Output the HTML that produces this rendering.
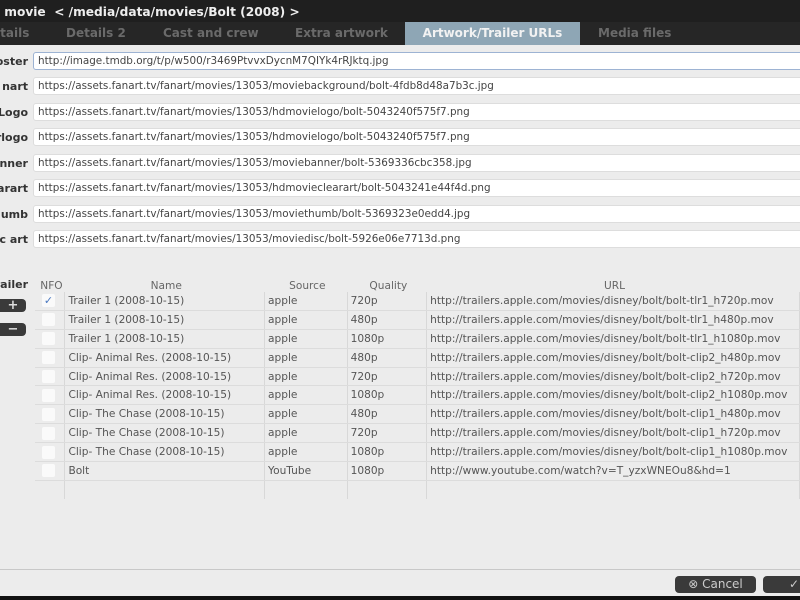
<!DOCTYPE html><html><head><style>
body{margin:0;width:800px;height:600px;overflow:hidden;background:#ececec;font-family:"DejaVu Sans","Liberation Sans",sans-serif;position:relative}
.t{position:absolute;left:0;top:0;width:800px;height:22px;background:#1f1f1f;color:#eee;font-weight:bold;font-size:12.2px;line-height:24px}
.tabs{position:absolute;left:0;top:22px;width:800px;height:23px;background:#262626}
.tab{position:absolute;top:0;height:23px;line-height:23px;font-size:12px;font-weight:bold;color:#6a6a6a}
.tab.a{background:#8ea6b5;color:#f2f2f2;text-align:center}
.lab{position:absolute;right:772px;font-size:11px;font-weight:bold;color:#333;white-space:nowrap}
.in{position:absolute;left:33px;width:775px;height:18px;background:#fff;border:1px solid #ddd;border-radius:3px;font-size:10.4px;color:#444;line-height:17px;padding-left:4px;box-sizing:border-box}
.in.f{border:1px solid #9db3d3}
table{position:absolute;left:35px;top:280px;border-collapse:collapse;font-size:10.6px;color:#555}
td,th{padding:0 0 0 3px;height:17.9px;white-space:nowrap;border-right:1px solid #d8d8d8;border-bottom:1px solid #dcdcdc;text-align:left}
th{font-weight:normal;text-align:center;height:12px;border:none;color:#666}
.cb{width:13px;height:13px;background:#fafafa;border-radius:2px;margin-left:4px;color:#4a78c0;font-size:11px;line-height:13px;text-align:center}
.btn{position:absolute;top:576px;height:17px;background:#3a3a3a;border-radius:4px;color:#ccc;font-size:12px;line-height:17px}
.pm{position:absolute;left:0;width:26px;height:13px;background:#3a3a3a;border-radius:0 4px 4px 0;color:#ddd;font-size:13px;line-height:13px;text-align:center;font-weight:bold}
</style></head><body>
<div class="t">&nbsp;movie &nbsp;&lt; /media/data/movies/Bolt (2008) &gt;</div>
<div class="tabs">
<div class="tab" style="left:-8px">etails</div>
<div class="tab" style="left:66px">Details 2</div>
<div class="tab" style="left:163px">Cast and crew</div>
<div class="tab" style="left:295px">Extra artwork</div>
<div class="tab a" style="left:405px;width:175px">Artwork/Trailer URLs</div>
<div class="tab" style="left:598px">Media files</div>
</div>
<div class="lab" style="top:55px">oster</div><div class="in f" style="top:52px">http://image.tmdb.org/t/p/w500/r3469PtvvxDycnM7QIYk4rRJktq.jpg</div>
<div class="lab" style="top:80px">nart</div><div class="in" style="top:77px">https://assets.fanart.tv/fanart/movies/13053/moviebackground/bolt-4fdb8d48a7b3c.jpg</div>
<div class="lab" style="top:106px">Logo</div><div class="in" style="top:103px">https://assets.fanart.tv/fanart/movies/13053/hdmovielogo/bolt-5043240f575f7.png</div>
<div class="lab" style="top:131px">rlogo</div><div class="in" style="top:128px">https://assets.fanart.tv/fanart/movies/13053/hdmovielogo/bolt-5043240f575f7.png</div>
<div class="lab" style="top:157px">nner</div><div class="in" style="top:154px">https://assets.fanart.tv/fanart/movies/13053/moviebanner/bolt-5369336cbc358.jpg</div>
<div class="lab" style="top:182px">arart</div><div class="in" style="top:179px">https://assets.fanart.tv/fanart/movies/13053/hdmovieclearart/bolt-5043241e44f4d.png</div>
<div class="lab" style="top:208px">humb</div><div class="in" style="top:205px">https://assets.fanart.tv/fanart/movies/13053/moviethumb/bolt-5369323e0edd4.jpg</div>
<div class="lab" style="top:233px">c art</div><div class="in" style="top:230px">https://assets.fanart.tv/fanart/movies/13053/moviedisc/bolt-5926e06e7713d.png</div>
<div class="lab" style="top:278px">railer</div>
<div class="pm" style="top:299px">+</div><div class="pm" style="top:323px">−</div>
<table>
<tr><th style="width:27px">NFO</th><th style="width:197px">Name</th><th style="width:80px">Source</th><th style="width:77px">Quality</th><th style="width:370px">URL</th></tr>
<tr><td><div class="cb">✓</div></td><td>Trailer 1 (2008-10-15)</td><td>apple</td><td>720p</td><td>http://trailers.apple.com/movies/disney/bolt/bolt-tlr1_h720p.mov</td></tr>
<tr><td><div class="cb"></div></td><td>Trailer 1 (2008-10-15)</td><td>apple</td><td>480p</td><td>http://trailers.apple.com/movies/disney/bolt/bolt-tlr1_h480p.mov</td></tr>
<tr><td><div class="cb"></div></td><td>Trailer 1 (2008-10-15)</td><td>apple</td><td>1080p</td><td>http://trailers.apple.com/movies/disney/bolt/bolt-tlr1_h1080p.mov</td></tr>
<tr><td><div class="cb"></div></td><td>Clip- Animal Res. (2008-10-15)</td><td>apple</td><td>480p</td><td>http://trailers.apple.com/movies/disney/bolt/bolt-clip2_h480p.mov</td></tr>
<tr><td><div class="cb"></div></td><td>Clip- Animal Res. (2008-10-15)</td><td>apple</td><td>720p</td><td>http://trailers.apple.com/movies/disney/bolt/bolt-clip2_h720p.mov</td></tr>
<tr><td><div class="cb"></div></td><td>Clip- Animal Res. (2008-10-15)</td><td>apple</td><td>1080p</td><td>http://trailers.apple.com/movies/disney/bolt/bolt-clip2_h1080p.mov</td></tr>
<tr><td><div class="cb"></div></td><td>Clip- The Chase (2008-10-15)</td><td>apple</td><td>480p</td><td>http://trailers.apple.com/movies/disney/bolt/bolt-clip1_h480p.mov</td></tr>
<tr><td><div class="cb"></div></td><td>Clip- The Chase (2008-10-15)</td><td>apple</td><td>720p</td><td>http://trailers.apple.com/movies/disney/bolt/bolt-clip1_h720p.mov</td></tr>
<tr><td><div class="cb"></div></td><td>Clip- The Chase (2008-10-15)</td><td>apple</td><td>1080p</td><td>http://trailers.apple.com/movies/disney/bolt/bolt-clip1_h1080p.mov</td></tr>
<tr><td><div class="cb"></div></td><td>Bolt</td><td>YouTube</td><td>1080p</td><td>http://www.youtube.com/watch?v=T_yzxWNEOu8&amp;hd=1</td></tr>
<tr><td style="height:10px;border-bottom:none"></td><td style="border-bottom:none"></td><td style="border-bottom:none"></td><td style="border-bottom:none"></td><td style="border-bottom:none"></td></tr>
</table>
<div style="position:absolute;left:0;top:569px;width:800px;height:1px;background:#c8c8c8"></div>
<div class="btn" style="left:675px;width:81px;text-align:center">⊗ Cancel</div>
<div class="btn" style="left:763px;width:50px;padding-left:26px;box-sizing:border-box">✓</div>
<div style="position:absolute;left:0;top:596px;width:800px;height:4px;background:#111"></div>
</body></html>
